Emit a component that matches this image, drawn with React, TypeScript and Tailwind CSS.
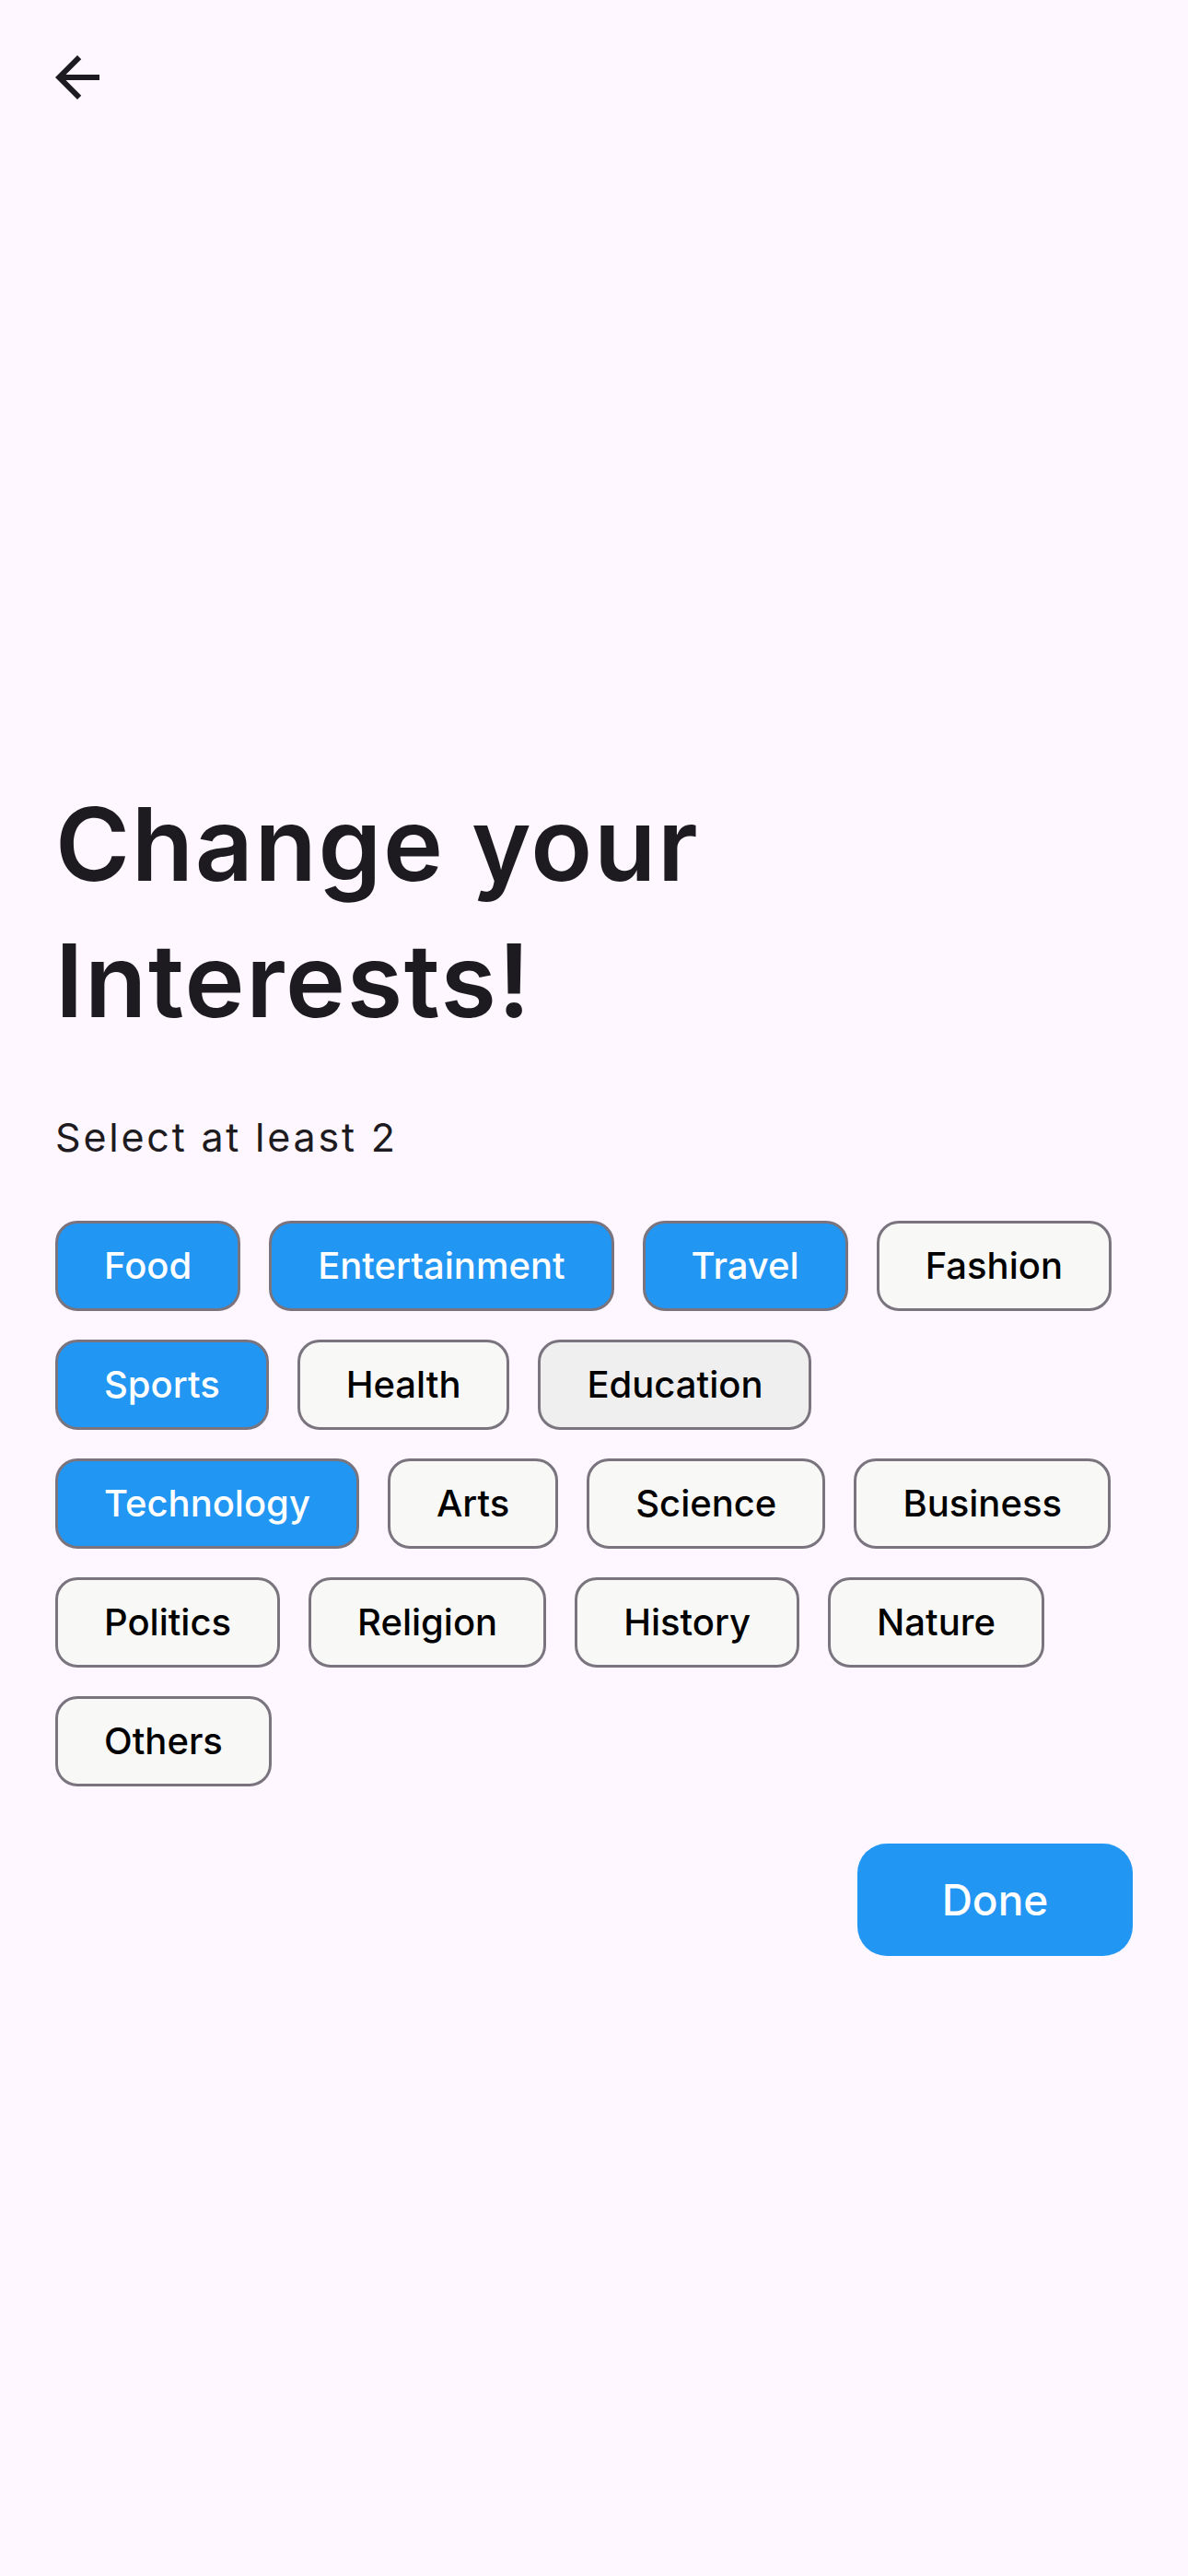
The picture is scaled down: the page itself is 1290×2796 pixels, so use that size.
import React from "react";

type Chip = { label: string; selected?: boolean; pressed?: boolean };

const chips: Chip[] = [
  { label: "Food", selected: true },
  { label: "Entertainment", selected: true },
  { label: "Travel", selected: true },
  { label: "Fashion" },
  { label: "Sports", selected: true },
  { label: "Health" },
  { label: "Education", pressed: true },
  { label: "Technology", selected: true },
  { label: "Arts" },
  { label: "Science" },
  { label: "Business" },
  { label: "Politics" },
  { label: "Religion" },
  { label: "History" },
  { label: "Nature" },
  { label: "Others" },
];

function ChipButton({ chip }: { chip: Chip }) {
  const base =
    "h-[98px] px-[50px] rounded-[24px] border-[3px] border-[#79747e] flex items-center justify-center text-[40px] font-medium leading-none";
  const cls = chip.selected
    ? `${base} bg-[#2196f3] text-white`
    : chip.pressed
    ? `${base} bg-[#efefef] text-black`
    : `${base} bg-[#f8f8f7] text-black`;
  return <div className={cls}>{chip.label}</div>;
}

export default function App() {
  return (
    <div
      className="min-h-[2796px] w-full bg-[#fef7ff] text-[#1d1b20]"
      style={{ fontFamily: "Inter, 'Open Sans', sans-serif" }}
    >
      <div className="pt-[48px] pl-[48px]">
        <div className="w-[72px] h-[72px] flex items-center justify-center">
          <svg viewBox="0 0 24 24" width="72" height="72" fill="#1d1b20">
            <path d="M20 11H7.83l5.59-5.59L12 4l-8 8 8 8 1.41-1.41L7.83 13H20v-2z" />
          </svg>
        </div>
      </div>
      <div className="px-[60px]">
        <h1 className="mt-[722px] text-[110px] leading-[148px] font-semibold tracking-[0.015em]">
          Change your
          <br />
          Interests!
        </h1>
        <p className="mt-[68px] text-[43px] leading-[56px] tracking-[0.065em]">
          Select at least 2
        </p>
        <div className="mt-[63px] flex flex-wrap gap-x-[31px] gap-y-[31px]">
          {chips.map((c) => (
            <ChipButton key={c.label} chip={c} />
          ))}
        </div>
        <div className="mt-[62px] flex justify-end">
          <button className="w-[299px] h-[122px] rounded-[32px] bg-[#2196f3] text-white text-[46px] font-medium">
            Done
          </button>
        </div>
      </div>
    </div>
  );
}
